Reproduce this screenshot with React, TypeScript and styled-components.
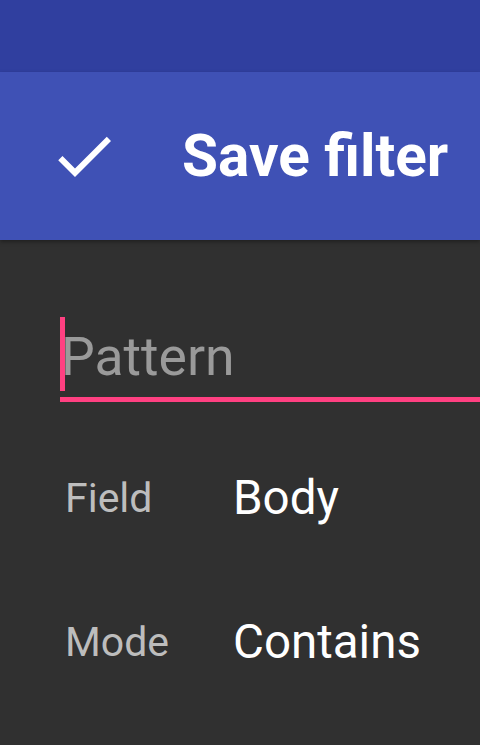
import React from "react";
import styled, { createGlobalStyle } from "styled-components";

const Global = createGlobalStyle`
  html, body { margin: 0; padding: 0; background: #303030; }
  body { font-family: Roboto, "Noto Sans", Arial, sans-serif; }
`;

const Screen = styled.div`
  width: 480px;
  height: 745px;
  background: #303030;
  display: flex;
  flex-direction: column;
  overflow: hidden;
`;

const StatusBar = styled.div`
  height: 72px;
  background: #303f9f;
  flex-shrink: 0;
`;

const Toolbar = styled.header`
  height: 168px;
  background: #3f51b5;
  display: flex;
  align-items: center;
  padding-left: 48px;
  gap: 62px;
  box-shadow: 0 2px 4px rgba(0, 0, 0, 0.35);
  position: relative;
  z-index: 1;
  flex-shrink: 0;
`;

const IconButton = styled.div`
  width: 72px;
  height: 72px;
  display: flex;
  align-items: center;
  justify-content: center;
  color: #fff;
`;

const Title = styled.h1`
  margin: 0;
  font-family: Roboto, "Noto Sans", Arial, sans-serif;
  font-weight: 700;
  font-size: 58.5px;
  line-height: 72px;
  color: #fff;
  white-space: nowrap;
`;

const Content = styled.main`
  padding-top: 77px;
  display: flex;
  flex-direction: column;
`;

const InputWrap = styled.div`
  position: relative;
  margin-left: 60px;
  height: 80px;
  border-bottom: 5px solid #ff4081;
`;

const Caret = styled.span`
  position: absolute;
  left: 0;
  top: 0;
  width: 5px;
  height: 74px;
  background: #ff4081;
`;

const Input = styled.input`
  display: block;
  width: 100%;
  height: 80px;
  box-sizing: border-box;
  border: 0;
  outline: none;
  background: transparent;
  padding: 0 0 0 1px;
  margin: 0;
  font-family: Roboto, "Noto Sans", Arial, sans-serif;
  font-size: 53.5px;
  line-height: 80px;
  color: #fff;
  caret-color: transparent;
  &::placeholder {
    color: #9a9a9a;
    opacity: 1;
  }
`;

const Rows = styled.div`
  margin-top: 24px;
  display: flex;
  flex-direction: column;
`;

const Row = styled.div`
  display: grid;
  grid-template-columns: 168px 1fr;
  padding-left: 65px;
  height: 144px;
  align-items: center;
`;

const Label = styled.span`
  font-size: 41px;
  line-height: 144px;
  color: #bdbdbd;
`;

const Value = styled.span`
  font-size: 47.5px;
  line-height: 144px;
  color: #fff;
`;

const CheckIcon = () => (
  <svg width="72" height="72" viewBox="0 0 24 24" fill="currentColor">
    <path d="M9 16.17L4.83 12l-1.42 1.41L9 19 21 7l-1.41-1.41z" />
  </svg>
);

const rows = [
  { label: "Field", value: "Body" },
  { label: "Mode", value: "Contains" },
];

export default function App() {
  return (
    <>
      <Global />
      <Screen>
        <StatusBar />
        <Toolbar>
          <IconButton>
            <CheckIcon />
          </IconButton>
          <Title>Save filter</Title>
        </Toolbar>
        <Content>
          <InputWrap>
            <Input placeholder="Pattern" />
            <Caret />
          </InputWrap>
          <Rows>
            {rows.map((r) => (
              <Row key={r.label}>
                <Label>{r.label}</Label>
                <Value>{r.value}</Value>
              </Row>
            ))}
          </Rows>
        </Content>
      </Screen>
    </>
  );
}
